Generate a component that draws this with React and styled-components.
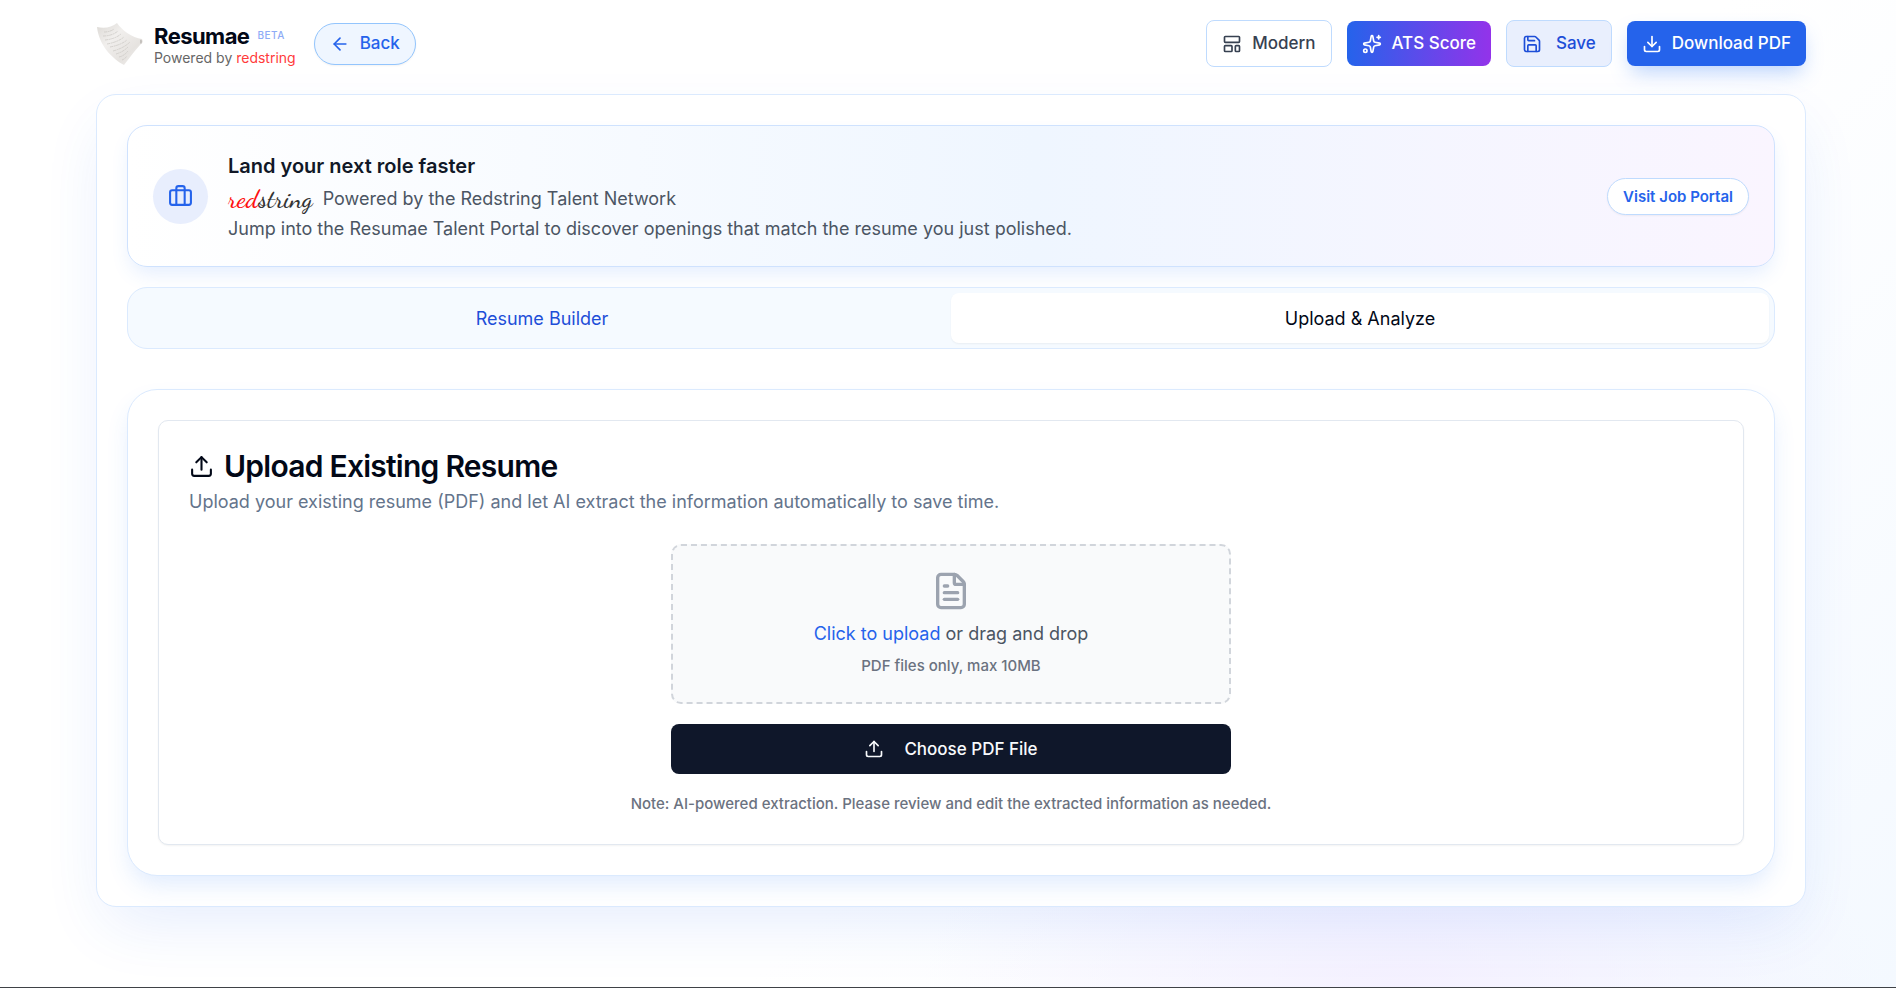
import React, { useRef, useState } from "react";
import styled, { createGlobalStyle } from "styled-components";
import {
    ArrowLeft,
    Briefcase,
    Download,
    FileText,
    Save,
    Sparkles,
    Upload,
} from "lucide-react";

const PaperLogo = () => (
    <svg width="48" height="44" viewBox="0 0 48 44" aria-hidden="true">
        <defs>
            <linearGradient id="paper" x1="0" y1="0" x2="1" y2="1">
                <stop offset="0" stopColor="#dcd9d5" />
                <stop offset="0.35" stopColor="#f1efed" />
                <stop offset="0.7" stopColor="#e6e3e0" />
                <stop offset="1" stopColor="#f3f2f0" />
            </linearGradient>
        </defs>
        <path
            d="M1 5C9 7 16 5 21 1C26 8 36 16 46 17C47 19 47 21 45 22C40 27 35 34 28 43C17 37 3 24 1 5Z"
            fill="url(#paper)"
        />
        <path d="M44 18C46 17 47 20 45 22L44 21Z" fill="#c4c1bd" />
        <g
            fill="none"
            stroke="#c9c6c2"
            strokeWidth="0.7"
            strokeDasharray="3 0.6 2 0.5"
        >
            <path d="M8 10Q14 10 18 7" />
            <path d="M7 14Q16 14 22 9" />
            <path d="M9 18Q19 17 25 12" />
            <path d="M11 22Q22 20 28 15" />
            <path d="M14 25Q25 23 31 18" />
            <path d="M17 29Q28 26 34 20" />
            <path d="M20 32Q27 30 32 25" />
            <path d="M23 35Q28 34 32 29" />
            <path d="M26 38Q29 37 31 34" />
        </g>
    </svg>
);

const TemplateIcon = () => (
    <svg
        width="20"
        height="20"
        viewBox="0 0 24 24"
        fill="none"
        stroke="currentColor"
        strokeWidth="2"
        strokeLinejoin="round"
        aria-hidden="true"
    >
        <rect x="3" y="3" width="18" height="7" rx="1" />
        <rect x="3" y="14" width="9" height="7" rx="1" />
        <rect x="16" y="14" width="5" height="7" rx="1" />
    </svg>
);

const App = () => {
    const [tab, setTab] = useState("upload");
    const fileInput = useRef(null);

    return (
        <Page>
            <GlobalStyle />
            <Header>
                <HeaderGroup>
                    <Brand href="#">
                        <PaperLogo />
                        <BrandText>
                            <BrandName>
                                Resumae <Beta>BETA</Beta>
                            </BrandName>
                            <PoweredBy>
                                Powered by <span>redstring</span>
                            </PoweredBy>
                        </BrandText>
                    </Brand>
                    <BackButton type="button">
                        <ArrowLeft size={20} />
                        Back
                    </BackButton>
                </HeaderGroup>
                <Actions>
                    <OutlineButton type="button">
                        <TemplateIcon />
                        Modern
                    </OutlineButton>
                    <ScoreButton type="button">
                        <Sparkles size={20} />
                        ATS Score
                    </ScoreButton>
                    <SaveButton type="button">
                        <Save size={20} />
                        Save
                    </SaveButton>
                    <DownloadButton type="button">
                        <Download size={20} />
                        Download PDF
                    </DownloadButton>
                </Actions>
            </Header>

            <Shell>
                <Banner>
                    <BannerIcon>
                        <Briefcase size={25} />
                    </BannerIcon>
                    <BannerBody>
                        <BannerTitle>Land your next role faster</BannerTitle>
                        <BannerNetwork>
                            <Wordmark>
                                <span>red</span>string
                            </Wordmark>
                            Powered by the Redstring Talent Network
                        </BannerNetwork>
                        <BannerLine>
                            Jump into the Resumae Talent Portal to discover
                            openings that match the resume you just polished.
                        </BannerLine>
                    </BannerBody>
                    <PortalLink href="#">Visit Job Portal</PortalLink>
                </Banner>

                <Tabs role="tablist">
                    <Tab
                        type="button"
                        role="tab"
                        aria-selected={tab === "builder"}
                        $active={tab === "builder"}
                        onClick={() => setTab("builder")}
                    >
                        Resume Builder
                    </Tab>
                    <Tab
                        type="button"
                        role="tab"
                        aria-selected={tab === "upload"}
                        $active={tab === "upload"}
                        onClick={() => setTab("upload")}
                    >
                        Upload &amp; Analyze
                    </Tab>
                </Tabs>

                <UploadPanel>
                    <UploadCard>
                        <UploadTitle>
                            <Upload size={25} />
                            Upload Existing Resume
                        </UploadTitle>
                        <UploadHint>
                            Upload your existing resume (PDF) and let AI extract
                            the information automatically to save time.
                        </UploadHint>
                        <UploadForm>
                            <DropZone htmlFor="resume-file">
                                <FileText size={40} />
                                <DropText>
                                    <span>Click to upload</span> or drag and
                                    drop
                                </DropText>
                                <SmallText>PDF files only, max 10MB</SmallText>
                            </DropZone>
                            <FileInput
                                id="resume-file"
                                type="file"
                                accept="application/pdf"
                                ref={fileInput}
                            />
                            <ChooseButton
                                type="button"
                                onClick={() => fileInput.current.click()}
                            >
                                <Upload size={20} />
                                Choose PDF File
                            </ChooseButton>
                        </UploadForm>
                        <Note>
                            Note: AI-powered extraction. Please review and edit
                            the extracted information as needed.
                        </Note>
                    </UploadCard>
                </UploadPanel>
            </Shell>
        </Page>
    );
};

// Styles
const GlobalStyle = createGlobalStyle`
    *, *::before, *::after {
        box-sizing: border-box;
    }
    body {
        margin: 0;
        background: #ffffff;
        color: #020817;
        font-family: Inter, "Liberation Sans", sans-serif;
        font-size: 18px;
        line-height: 25px;
    }
    h1, h2, p {
        margin: 0;
    }
    a {
        text-decoration: none;
    }
    button {
        font-family: inherit;
        cursor: pointer;
    }
    svg {
        flex-shrink: 0;
    }
`;

const Page = styled.div`
    min-height: 100vh;
    padding: 20px 90px 80px 96px;
    border-bottom: 1px solid #3f4246;
    overflow: hidden;
    background:
        radial-gradient(
            ellipse 480px 240px at 74% 100%,
            rgba(243, 238, 255, 0.8),
            rgba(243, 238, 255, 0)
        ),
        linear-gradient(135deg, #ffffff 60%, #f4f9ff 100%);
`;

const Header = styled.header`
    display: flex;
    justify-content: space-between;
    align-items: center;
    margin-bottom: 27px;
`;

const HeaderGroup = styled.div`
    display: flex;
    align-items: center;
    gap: 18px;
`;

const Brand = styled.a`
    display: flex;
    align-items: center;
    gap: 10px;
    color: #020817;
`;

const BrandText = styled.div`
    display: flex;
    flex-direction: column;
    padding-top: 4px;
`;

const BrandName = styled.div`
    display: flex;
    gap: 8px;
    font-size: 22px;
    font-weight: 700;
    line-height: 25px;
    letter-spacing: -0.025em;
`;

const Beta = styled.span`
    color: #8eabf6;
    font-size: 10px;
    font-weight: 500;
    line-height: 22px;
    letter-spacing: 0.05em;
`;

const PoweredBy = styled.div`
    color: #666666;
    font-size: 14px;
    line-height: 18px;

    span {
        color: #ff3b3b;
    }
`;

const Button = styled.button`
    display: inline-flex;
    align-items: center;
    justify-content: center;
    gap: 10px;
    height: 45px;
    padding: 0 15px;
    border: none;
    border-radius: 8px;
    font-size: 17px;
    font-weight: 500;
    line-height: 25px;
    white-space: nowrap;
`;

const BackButton = styled(Button)`
    height: 42px;
    border: 1px solid #93c5fd;
    border-radius: 21px;
    background: #eff6ff;
    color: #2563eb;
    box-shadow: 0 1px 2px rgba(0, 0, 0, 0.05);
`;

const Actions = styled.div`
    display: flex;
    align-items: center;
    gap: 15px;
`;

const OutlineButton = styled(Button)`
    height: 47px;
    border: 1px solid #bfdbfe;
    background: #ffffff;
    color: #374151;
`;

const ScoreButton = styled(Button)`
    background: linear-gradient(to right, #2563eb, #9333ea);
    color: #ffffff;
`;

const SaveButton = styled(OutlineButton)`
    gap: 14px;
    background: #e9effd;
    color: #1d4ed8;
`;

const DownloadButton = styled(Button)`
    background: #2563eb;
    color: #ffffff;
    box-shadow: 0 10px 20px -4px rgba(59, 130, 246, 0.35);
`;

const Shell = styled.main`
    padding: 30px;
    border: 1px solid #dbeafe;
    border-radius: 20px;
    background: #ffffff;
    box-shadow: 0 25px 65px -12px rgba(37, 99, 235, 0.12);
`;

const Banner = styled.section`
    display: flex;
    align-items: center;
    gap: 20px;
    padding: 25px;
    border: 1px solid #cfe2fe;
    border-radius: 20px;
    background: linear-gradient(to right, #ffffff, #eff6ff 55%, #faf5ff);
    box-shadow: 0 10px 20px -4px rgba(59, 130, 246, 0.14);
`;

const BannerIcon = styled.div`
    display: flex;
    align-items: center;
    justify-content: center;
    width: 55px;
    height: 55px;
    border-radius: 50%;
    background: #e8eefd;
    color: #2563eb;
`;

const BannerBody = styled.div`
    flex: 1;
`;

const BannerTitle = styled.h2`
    color: #111827;
    font-size: 20px;
    font-weight: 600;
    line-height: 30px;
`;

const BannerNetwork = styled.div`
    display: flex;
    align-items: center;
    gap: 10px;
    color: #4b5563;
    line-height: 35px;
`;

const Wordmark = styled.span`
    color: #333333;
    font-family: "Dancing Script", cursive;
    font-size: 26px;
    font-weight: 500;
    line-height: 30px;

    span {
        color: #ff1010;
    }
`;

const BannerLine = styled.p`
    color: #4b5563;
`;

const PortalLink = styled.a`
    padding: 5px 15px;
    border: 1px solid #bfdbfe;
    border-radius: 19px;
    background: #ffffff;
    color: #2563eb;
    font-size: 15px;
    font-weight: 600;
    box-shadow: 0 1px 2px rgba(0, 0, 0, 0.05);
`;

const Tabs = styled.div`
    display: grid;
    grid-template-columns: 1fr 1fr;
    margin-top: 20px;
    padding: 5px;
    border: 1px solid #dbeafe;
    border-radius: 20px;
    background: #f5faff;
`;

const Tab = styled(Button)`
    height: 50px;
    background: ${(props) => (props.$active ? "#ffffff" : "transparent")};
    color: ${(props) => (props.$active ? "#020817" : "#1d4ed8")};
    font-size: 18px;
    font-weight: 400;
    box-shadow: ${(props) =>
        props.$active ? "0 1px 2px rgba(0, 0, 0, 0.05)" : "none"};
`;

const UploadPanel = styled.section`
    margin-top: 40px;
    padding: 30px;
    border: 1px solid #dbeafe;
    border-radius: 30px;
    background: #ffffff;
    box-shadow: 0 12px 24px -4px rgba(59, 130, 246, 0.16);
`;

const UploadCard = styled.div`
    padding: 30px;
    border: 1px solid #e2e8f0;
    border-radius: 10px;
    background: #ffffff;
    box-shadow: 0 1px 2px rgba(0, 0, 0, 0.05);
`;

const UploadTitle = styled.h1`
    display: flex;
    align-items: center;
    gap: 10px;
    font-size: 30px;
    font-weight: 600;
    line-height: 30px;
    letter-spacing: -0.025em;
`;

const UploadHint = styled.p`
    margin-top: 8px;
    color: #64748b;
`;

const UploadForm = styled.div`
    display: flex;
    flex-direction: column;
    gap: 20px;
    max-width: 560px;
    margin: 30px auto 0;
`;

const DropZone = styled.label`
    display: flex;
    flex-direction: column;
    align-items: center;
    padding: 25px 30px 26px;
    border: 2px dashed #d1d5db;
    border-radius: 10px;
    background: #f9fafb;
    color: #9ca3af;
    cursor: pointer;
`;

const DropText = styled.div`
    margin-top: 10px;
    color: #4b5563;

    span {
        color: #2563eb;
    }
`;

const SmallText = styled.div`
    margin-top: 10px;
    color: #6b7280;
    font-size: 15px;
    font-weight: 500;
    line-height: 20px;
`;

const FileInput = styled.input`
    display: none;
`;

const ChooseButton = styled(Button)`
    gap: 20px;
    height: 50px;
    background: #0f172a;
    color: #f8fafc;
`;

const Note = styled(SmallText)`
    margin-top: 20px;
    text-align: center;
`;

export default App;
